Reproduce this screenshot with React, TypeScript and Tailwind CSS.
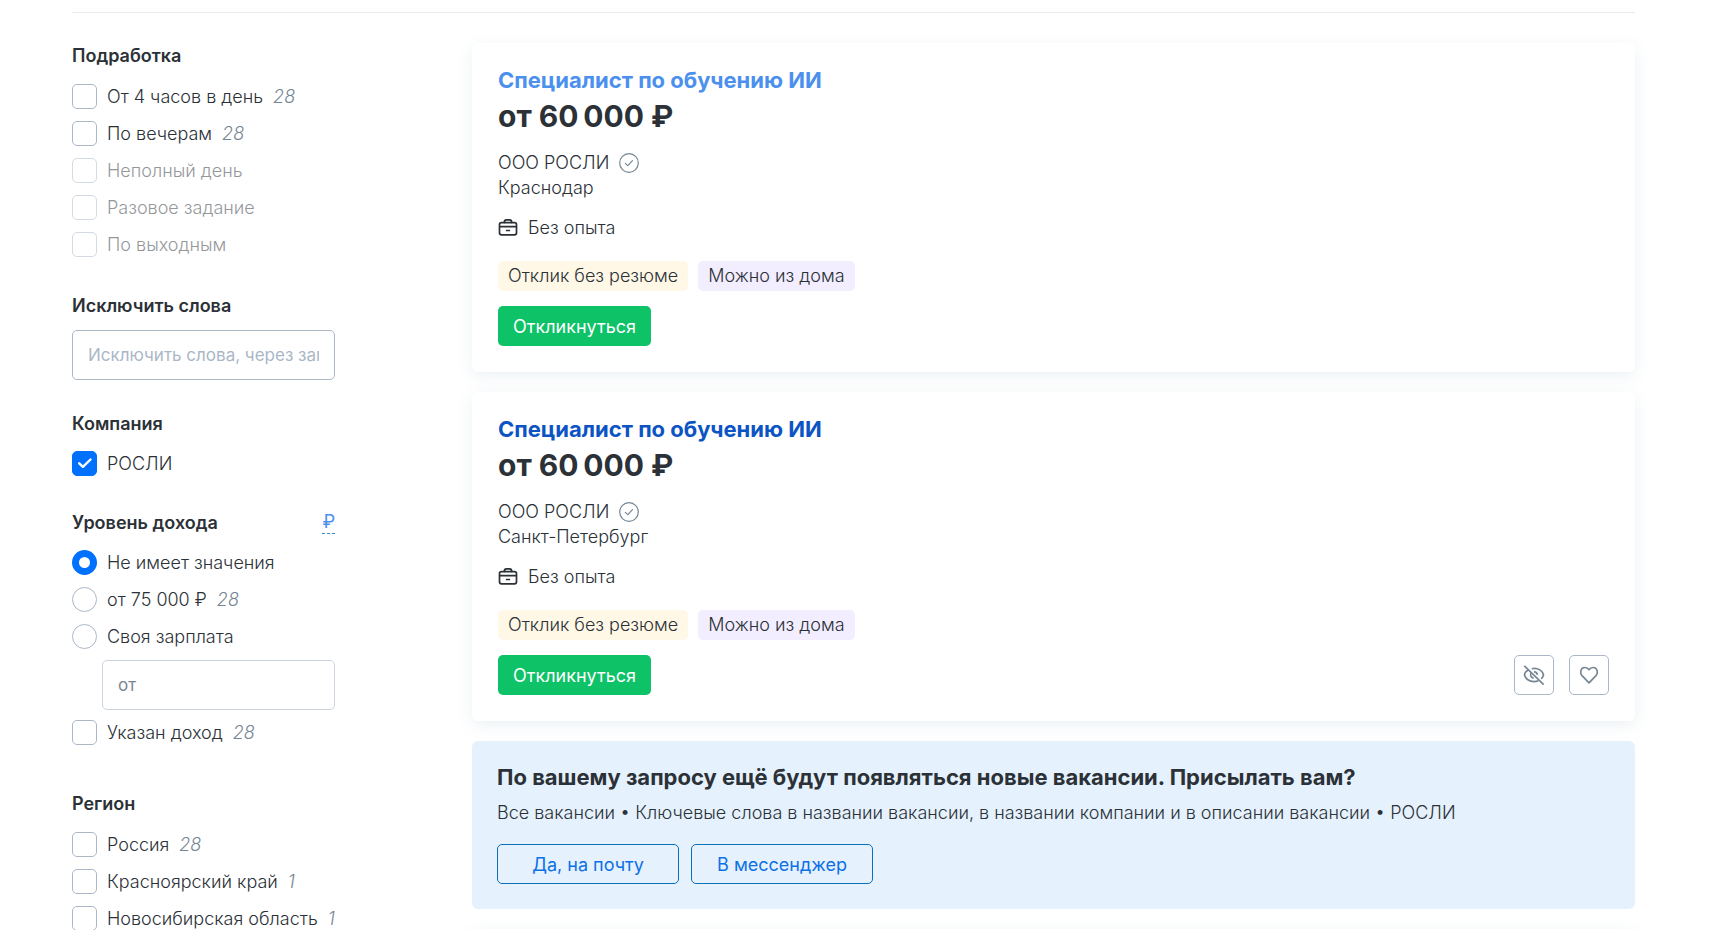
import { useState } from 'react';
import type { ReactNode } from 'react';

// --- Types ---
interface Option {
  label: string;
  count?: number;
  disabled?: boolean;
  checked?: boolean;
}

interface Vacancy {
  id: number;
  title: string;
  salary: string;
  company: string;
  city: string;
  titleClass: string;
  actions: boolean;
}

// --- Data ---
const partTime: Option[] = [
  { label: 'От 4 часов в день', count: 28 },
  { label: 'По вечерам', count: 28 },
  { label: 'Неполный день', disabled: true },
  { label: 'Разовое задание', disabled: true },
  { label: 'По выходным', disabled: true },
];

const income: Option[] = [
  { label: 'Не имеет значения' },
  { label: 'от 75 000 ₽', count: 28 },
  { label: 'Своя зарплата' },
];

const regions: Option[] = [
  { label: 'Россия', count: 28 },
  { label: 'Красноярский край', count: 1 },
  { label: 'Новосибирская область', count: 1 },
];

const vacancies: Vacancy[] = [
  {
    id: 1,
    title: 'Специалист по обучению ИИ',
    salary: 'от 60\u202f000 ₽',
    company: 'ООО РОСЛИ',
    city: 'Краснодар',
    titleClass: 'text-[#4c90ee]',
    actions: false,
  },
  {
    id: 2,
    title: 'Специалист по обучению ИИ',
    salary: 'от 60\u202f000 ₽',
    company: 'ООО РОСЛИ',
    city: 'Санкт-Петербург',
    titleClass: 'text-[#0c54c4]',
    actions: true,
  },
];

// --- Icons ---
function BriefcaseIcon() {
  return (
    <svg className="size-5 shrink-0" viewBox="0 0 20 20" fill="none" stroke="#2b3137" strokeWidth="1.700" strokeLinecap="round" aria-hidden="true">
      <rect x="1.500" y="4.600" width="17" height="12.200" rx="2" />
      <path d="M1.800 8.700h16.400M8.600 12.500h2.800M6.300 4.400c0-1.800 1-2.600 2.200-2.600h3c1.200 0 2.200.8 2.200 2.600" />
    </svg>
  );
}

function VerifiedIcon() {
  return (
    <svg className="size-5 shrink-0" viewBox="0 0 20 20" fill="none" stroke="#768694" strokeWidth="1.2" strokeLinecap="round" strokeLinejoin="round" aria-hidden="true">
      <circle cx="10" cy="10" r="9.300" />
      <path d="M6.300 10.400l2.500 2.200 4.700-5" />
    </svg>
  );
}

function HideIcon() {
  return (
    <svg className="size-6" viewBox="0 0 24 24" fill="none" stroke="#768694" strokeWidth="1.700" aria-hidden="true">
      <path d="M2.300 2.800l19.400 18.900" />
      <path d="M6.300 6.800C4.300 8 2.800 10 2.500 12c.9 3.800 4.800 6.600 9.500 6.600 1.600 0 3.100-.3 4.400-.9M9.800 5.700c.7-.2 1.500-.3 2.300-.3 4.700 0 8.500 2.800 9.400 6.600-.3 1.400-1.100 2.700-2.200 3.800" />
      <path d="M9.200 9.700c-1.600 2.200-.2 5.200 2.500 5.400M12 8.800c1.800 0 3.200 1.300 3.300 3" />
    </svg>
  );
}

function HeartIcon() {
  return (
    <svg className="size-6" viewBox="0 0 24 24" fill="none" stroke="#768694" strokeWidth="1.700" strokeLinejoin="round" aria-hidden="true">
      <path d="M12 19.800l-7-7.100a4.600 4.600 0 0 1-1.300-3.700C3.900 6.200 5.700 4.500 8 4.500c1.700 0 3.100.8 4 2.200.9-1.400 2.300-2.200 4-2.200 2.300 0 4.100 1.700 4.300 4.500a4.600 4.600 0 0 1-1.300 3.700z" />
    </svg>
  );
}

// --- Filter controls ---
function Count({ value }: { value?: number }) {
  if (value === undefined) return null;
  return <span className="ml-2.5 text-[#768694] italic">{value}</span>;
}

function Checkbox({ label, count, disabled, checked }: Option) {
  const [on, setOn] = useState(!!checked);
  return (
    <label className={`flex h-[25px] items-center whitespace-nowrap ${disabled ? 'opacity-50' : 'cursor-pointer'}`}>
      <span className="relative mr-2.5 grid size-[25px] shrink-0">
        <input
          type="checkbox"
          disabled={disabled}
          checked={on}
          onChange={(e) => setOn(e.target.checked)}
          className="size-full appearance-none rounded-[5px] border border-[#aab7c7] bg-white checked:border-[#0070ff] checked:bg-[#0070ff]"
        />
        {on && (
          <svg className="pointer-events-none absolute inset-0" viewBox="0 0 25 25" fill="none" stroke="#fff" strokeWidth="2.400" strokeLinecap="round" strokeLinejoin="round" aria-hidden="true">
            <path d="M7.200 12.300l3.700 3.500 7.600-7.300" />
          </svg>
        )}
      </span>
      <span>{label}</span>
      <Count value={count} />
    </label>
  );
}

function Radio({ label, count, checked, onSelect }: Option & { onSelect: () => void }) {
  return (
    <label className="flex h-[25px] cursor-pointer items-center whitespace-nowrap">
      <input
        type="radio"
        name="income"
        checked={checked}
        onChange={onSelect}
        className="mr-2.5 size-[25px] shrink-0 appearance-none rounded-full border border-[#aab7c7] bg-white checked:border-[7px] checked:border-[#0070ff]"
      />
      <span>{label}</span>
      <Count value={count} />
    </label>
  );
}

function FilterTitle({ children }: { children: ReactNode }) {
  return <h3 className="text-lg/[25px] font-semibold text-[#2b3137]">{children}</h3>;
}

function Filters() {
  const [selected, setSelected] = useState(0);

  return (
    <aside className="w-[263px] shrink-0">
      <section>
        <FilterTitle>Подработка</FilterTitle>
        <div className="mt-4 flex flex-col gap-3">
          {partTime.map((o) => <Checkbox key={o.label} {...o} />)}
        </div>
      </section>

      <section className="mt-9">
        <FilterTitle>
          <label htmlFor="exclude">Исключить слова</label>
        </FilterTitle>
        <input
          id="exclude"
          type="text"
          placeholder="Исключить слова, через запятую"
          className="mt-3 block h-[50px] w-full rounded-[5px] border border-[#aab7c7] px-[15px] text-[17px] font-normal placeholder:text-[#aab7c7]"
        />
      </section>

      <section className="mt-[31px]">
        <FilterTitle>Компания</FilterTitle>
        <div className="mt-[15px]">
          <Checkbox label="РОСЛИ" checked />
        </div>
      </section>

      <section className="mt-[34px]">
        <div className="flex items-center justify-between">
          <FilterTitle>Уровень дохода</FilterTitle>
          <button type="button" className="border-b border-dashed border-[#3b8bd0] text-lg/[22px] font-normal text-[#4c90ee]">₽</button>
        </div>
        <div className="mt-[15px] flex flex-col gap-3">
          {income.map((o, i) => (
            <Radio key={o.label} {...o} checked={selected === i} onSelect={() => setSelected(i)} />
          ))}
        </div>
        <input
          type="text"
          aria-label="от"
          placeholder="от"
          className="mt-[11px] ml-[30px] block h-[50px] w-[233px] rounded-[5px] border border-[#ccd5df] px-[15px] text-[17px] font-normal placeholder:text-[#768694]"
        />
        <div className="mt-2.5">
          <Checkbox label="Указан доход" count={28} />
        </div>
      </section>

      <section className="mt-[46px]">
        <FilterTitle>Регион</FilterTitle>
        <div className="mt-4 flex flex-col gap-3">
          {regions.map((o) => <Checkbox key={o.label} {...o} />)}
        </div>
      </section>
    </aside>
  );
}

// --- Search results ---
function VacancyCard({ vacancy }: { vacancy: Vacancy }) {
  return (
    <article className="rounded-md bg-white px-[26px] pt-[25px] pb-[26px] shadow-[0_4px_15px_rgba(112,146,177,0.13)]">
      <h2 className="text-[22px]/[25px] font-bold">
        <a href="#vacancy" className={vacancy.titleClass}>{vacancy.title}</a>
      </h2>
      <p className="mt-1.5 text-[30px]/[34px] font-bold text-[#2b3137]">{vacancy.salary}</p>
      <div className="mt-[17px] flex items-center gap-2.5">
        <span>{vacancy.company}</span>
        <VerifiedIcon />
      </div>
      <p>{vacancy.city}</p>
      <div className="mt-[15px] flex items-center gap-2.5">
        <BriefcaseIcon />
        <span>Без опыта</span>
      </div>
      <div className="mt-[21px] flex gap-2.5">
        <span className="rounded-[5px] bg-[#fff8e6] px-2.5 leading-[30px]">Отклик без резюме</span>
        <span className="rounded-[5px] bg-[#f2edff] px-2.5 leading-[30px]">Можно из дома</span>
      </div>
      <div className="mt-[15px] flex items-center justify-between">
        <button type="button" className="h-10 rounded-[5px] bg-[#0dc267] px-[15px] font-normal text-white">Откликнуться</button>
        {vacancy.actions && (
          <div className="flex gap-[15px]">
            <button type="button" aria-label="Скрыть" className="grid size-10 place-items-center rounded-[5px] border border-[#aab7c7]">
              <HideIcon />
            </button>
            <button type="button" aria-label="В избранное" className="grid size-10 place-items-center rounded-[5px] border border-[#aab7c7]">
              <HeartIcon />
            </button>
          </div>
        )}
      </div>
    </article>
  );
}

function Subscribe() {
  const button = 'h-10 w-[182px] rounded-[5px] border border-[#0d6fb8] font-normal text-[#0d70e6]';
  return (
    <section className="rounded-md bg-[#e5f1fd] px-[25px] pt-6 pb-[25px]">
      <h2 className="text-[22px]/[25px] font-bold text-[#2b3137]">По вашему запросу ещё будут появляться новые вакансии. Присылать вам?</h2>
      <p className="mt-2.5">Все вакансии • Ключевые слова в названии вакансии, в названии компании и в описании вакансии • РОСЛИ</p>
      <div className="mt-[19px] flex gap-3">
        <button type="button" className={button}>Да, на почту</button>
        <button type="button" className={button}>В мессенджер</button>
      </div>
    </section>
  );
}

export default function App() {
  return (
    <div className="h-screen overflow-hidden bg-white pt-3 pr-[84px] pl-[72px] font-['Inter','Liberation_Sans',sans-serif] text-lg/[25px] font-light text-[#2b3137]">
      <hr className="border-[#e8ebef]" />
      <div className="flex items-start gap-[137px] pt-[30px]">
        <Filters />
        <main className="flex min-w-0 flex-1 flex-col gap-5">
          {vacancies.map((v) => <VacancyCard key={v.id} vacancy={v} />)}
          <Subscribe />
          {/* next card placeholder */}
          <div className="h-80 rounded-md bg-white shadow-[0_4px_15px_rgba(112,146,177,0.13)]" />
        </main>
      </div>
    </div>
  );
}
